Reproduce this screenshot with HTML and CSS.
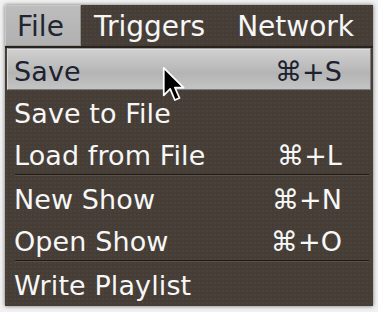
FILE: index.html
```html
<!DOCTYPE html>
<html>
<head>
<meta charset="utf-8">
<link rel="stylesheet" href="styles.css">
</head>
<body>
<div class="panel">
  <div class="menubar">
    <div class="menu-title active">File</div>
    <div class="menu-title">Triggers</div>
    <div class="menu-title">Network</div>
  </div>
  <div class="menubar-rule"></div>
  <div class="dropdown">
    <div class="item selected"><span class="label">Save</span><span class="key">⌘+S</span></div>
    <div class="item"><span class="label">Save to File</span><span class="key"></span></div>
    <div class="item"><span class="label">Load from File</span><span class="key">⌘+L</span></div>
    <div class="sep"></div>
    <div class="item"><span class="label">New Show</span><span class="key">⌘+N</span></div>
    <div class="item"><span class="label">Open Show</span><span class="key">⌘+O</span></div>
    <div class="sep"></div>
    <div class="item"><span class="label">Write Playlist</span><span class="key"></span></div>
  </div>
  <svg class="cursor" width="28" height="40" viewBox="0 0 24 34">
    <path d="M1.5 1.5 L1.5 25 L7 19.5 L11 29 L15 27.3 L11 18.3 L18.5 18.3 Z" fill="#000" stroke="#fff" stroke-width="1.5" stroke-linejoin="round"/>
  </svg>
</div>
</body>
</html>
```

FILE: styles.css
```css
html, body {
  margin: 0;
  padding: 0;
}
body {
  width: 378px;
  height: 312px;
  background: #f1f1f1;
  font-family: "DejaVu Sans", "Liberation Sans", sans-serif;
  overflow: hidden;
}
.panel {
  position: relative;
  margin: 5px;
  width: 368px;
  height: 301px;
  background-color: #463e36;
  background-image: radial-gradient(rgba(255,255,255,0.025) 0.8px, transparent 1px);
  background-size: 4px 4px;
  box-shadow: 0 0 4px rgba(0,0,0,0.55);
  display: flex;
  flex-direction: column;
}
.menubar {
  display: flex;
  height: 41px;
}
.menu-title {
  font-size: 28px;
  line-height: 41px;
  padding: 1px 12px 0 12px;
  color: #f6f6f6;
  box-sizing: border-box;
  height: 41px;
}
.menu-title.active {
  width: 76px;
  padding-left: 11px;
  padding-right: 0;
  color: #1f2532;
  background: linear-gradient(#bdbdbd, #b1b1b1);
  border: 1px solid #cacaca;
  border-right-color: #8e8e8e;
  border-bottom-color: #9a9a9a;
  line-height: 39px;
}
.menu-title:nth-child(2) {
  padding-left: 13px;
  padding-right: 20px;
}
.menubar-rule {
  height: 2px;
  background: #28221d;
}
.dropdown {
  display: flex;
  flex-direction: column;
  padding: 0 2px;
}
.item {
  display: flex;
  justify-content: space-between;
  box-sizing: border-box;
  height: 42px;
  padding: 4px 28px 0 6px;
  font-size: 27px;
  letter-spacing: 0.1px;
  line-height: 38px;
  color: #f7f7f7;
  border: 1px solid transparent;
}
.item.selected {
  color: #1c2230;
  background: linear-gradient(#d0d0d0 0%, #bcbcbc 45%, #b4b4b4 60%, #c4c4c4 100%);
  border-color: #7b7b7b;
  border-top-color: #9c9c9c;
  border-left-color: #d8d8d8;
  box-shadow: inset 0 1px 0 #dedede;
}
.key {
  white-space: nowrap;
}
.sep {
  height: 2px;
  margin: 0 2px 0 8px;
  background: linear-gradient(#201b17 50%, #5a5148 50%);
}
.cursor {
  position: absolute;
  left: 157px;
  top: 61px;
}
```
